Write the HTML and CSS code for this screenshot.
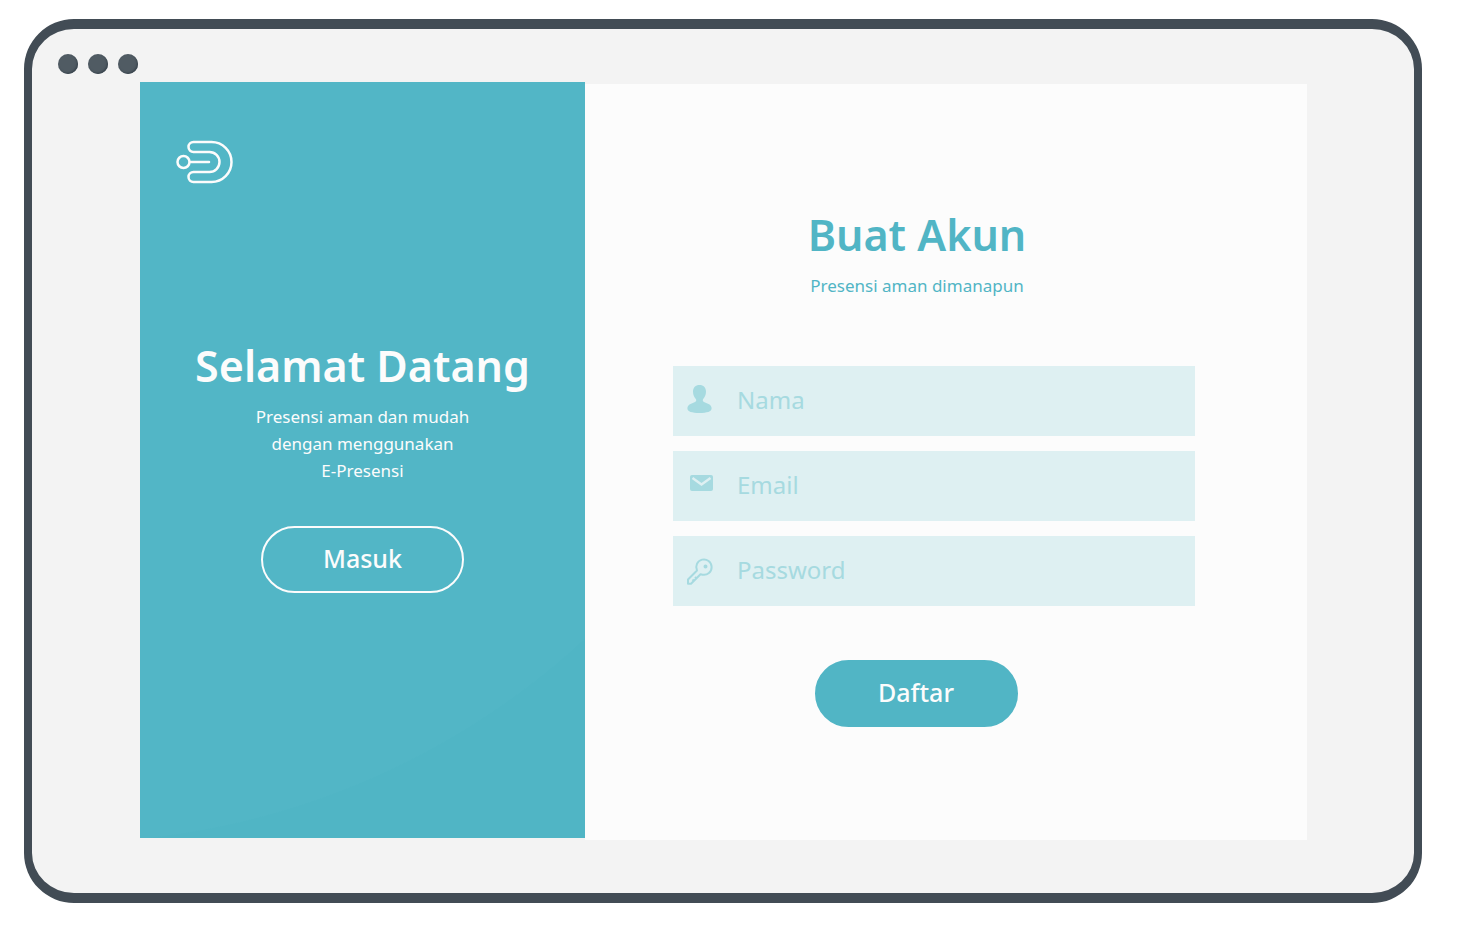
FILE: index.html
```html
<!DOCTYPE html>
<html lang="id">
<head>
<meta charset="utf-8">
<meta name="viewport" content="width=device-width, initial-scale=1">
<title>E-Presensi</title>
<link rel="stylesheet" href="styles.css">
</head>
<body>
<div class="window">
  <div class="window-bar" aria-hidden="true">
    <span class="dot"></span><span class="dot"></span><span class="dot"></span>
  </div>
  <main class="screen">
    <section class="welcome">
      <svg class="logo" viewBox="-1 0 60 46" aria-hidden="true">
        <circle cx="7.500" cy="23" r="6"/>
        <path d="M14 23H33"/>
        <path d="M17.500 3H35.500A20 20 0 0 1 35.500 43H17.500A5 5 0 0 1 17.500 33H33.500A10 10 0 0 0 33.500 13H17.500A5 5 0 0 1 17.500 3Z"/>
      </svg>
      <div class="welcome-body">
        <h1 class="title">Selamat Datang</h1>
        <p class="lead">Presensi aman dan mudah<br>dengan menggunakan<br>E-Presensi</p>
        <button class="pill pill-outline" type="button">Masuk</button>
      </div>
    </section>
    <section class="signup">
      <header class="signup-head">
        <h2 class="title">Buat Akun</h2>
        <p class="lead">Presensi aman dimanapun</p>
      </header>
      <form class="form">
        <label class="field">
          <svg class="icon" viewBox="0 2 28 28" aria-hidden="true"><path d="M13.500 0C17.500 0 20 2.700 20 6.500C20 10 18.600 12.500 17 14.300C16.400 15.700 17 16.600 18.500 17.200L22.500 19C24.700 20 25.600 21.500 25.600 23.500C25.600 26.500 21 28 13.500 28S1.400 26.500 1.400 23.500C1.400 21.500 2.300 20 4.500 19L8.500 17.200C10 16.600 10.600 15.700 10 14.300C8.400 12.500 7 10 7 6.500C7 2.700 9.500 0 13.500 0Z"/></svg>
          <input class="input" type="text" placeholder="Nama" aria-label="Nama">
        </label>
        <label class="field">
          <svg class="icon" viewBox="0 3 28 28" aria-hidden="true"><rect x="4" y="6" width="23" height="16" rx="2"/><path class="flap" d="M6.500 9L15.500 15.500L24.500 9"/></svg>
          <input class="input" type="email" placeholder="Email" aria-label="Email">
        </label>
        <label class="field">
          <svg class="icon icon-line" viewBox="0 -1 28 28" aria-hidden="true"><path d="M11 12.500A7.700 7.700 0 1 1 16.500 16.700L14.500 16.200L5 25.800H2V21.500L11 12.500ZM6.500 21.500L8 23M9 19L10.500 20.500"/><circle cx="19.500" cy="8.400" r="1"/></svg>
          <input class="input" type="password" placeholder="Password" aria-label="Password">
        </label>
        <div class="actions">
          <button class="pill pill-solid" type="submit">Daftar</button>
        </div>
      </form>
    </section>
  </main>
</div>
</body>
</html>
```
FILE: styles.css
```css
:root {
  --teal: #51b5c5;
  --teal-light: #a6dae0;
  --field: #def0f2;
  --paper: #fcfcfc;
  --frame: #424c55;
}

* { box-sizing: border-box; }

body {
  margin: 0;
  background: #fff;
  font-family: "Noto Sans", "Open Sans", sans-serif;
}

h1, h2, p { margin: 0; }

.window {
  display: flex;
  flex-direction: column;
  min-height: calc(100vh - 47px);
  margin: 19px 35px 28px 24px;
  border: solid var(--frame);
  border-width: 10px 8px;
  border-radius: 50px;
  background: #f3f3f3;
}

.window-bar {
  display: flex;
  gap: 10px;
  padding: 25px 26px 8px;
}

.dot {
  width: 20px;
  height: 20px;
  border-radius: 50%;
  background: #505b63;
  box-shadow: inset -1px -1px 2px #39444d;
}

.screen {
  flex: 1;
  display: grid;
  grid-template-columns: 445fr 722fr;
  margin: 0 107px 53px 108px;
}

.welcome {
  margin-bottom: 2px;
  padding: 57px 35px;
  background: radial-gradient(circle at -76px -7px, #52b6c6 767px, #50b5c5 768px);
  color: var(--paper);
}

.logo {
  display: block;
  width: 60px;
  height: 46px;
  fill: none;
  stroke: var(--paper);
  stroke-width: 2.5;
  stroke-linecap: round;
}

.welcome-body {
  display: flex;
  flex-direction: column;
  align-items: center;
  padding-top: 150px;
  text-align: center;
}

.title {
  font-size: 43px;
  font-weight: 600;
  line-height: 62px;
  white-space: nowrap;
}

.lead {
  margin-top: 6px;
  font-size: 17px;
  font-weight: 400;
  line-height: 27px;
}

.pill {
  width: 203px;
  height: 67px;
  padding: 0 0 4px;
  border: 2px solid var(--teal);
  border-radius: 34px;
  color: var(--paper);
  font-family: inherit;
  font-size: 25px;
  font-weight: 500;
}

.pill-outline {
  margin-top: 42px;
  border-color: var(--paper);
  background: transparent;
}

.pill-solid { background: var(--teal); }

.signup {
  margin-top: 2px;
  padding: 120px 112px 112px 88px;
  background: var(--paper);
}

.signup-head {
  padding-right: 34px;
  color: var(--teal);
  text-align: center;
}

.form {
  display: flex;
  flex-direction: column;
  gap: 15px;
  margin-top: 67px;
}

.field {
  display: flex;
  align-items: center;
  gap: 23px;
  height: 70px;
  padding: 0 13px;
  background: var(--field);
}

.icon {
  flex: none;
  width: 28px;
  height: 28px;
  overflow: visible;
  fill: var(--teal-light);
}

.icon-line {
  fill: none;
  stroke: var(--teal-light);
  stroke-width: 2;
  stroke-linejoin: round;
}

.flap {
  fill: none;
  stroke: var(--field);
  stroke-width: 2.4;
}

.input {
  flex: 1;
  min-width: 0;
  padding: 0 0 3px;
  border: 0;
  outline: 0;
  background: transparent;
  color: var(--teal);
  font-family: inherit;
  font-size: 24px;
  font-weight: 400;
}

.input::placeholder {
  color: var(--teal-light);
  opacity: 1;
}

.actions {
  padding: 39px 36px 0 0;
  text-align: center;
}
```
